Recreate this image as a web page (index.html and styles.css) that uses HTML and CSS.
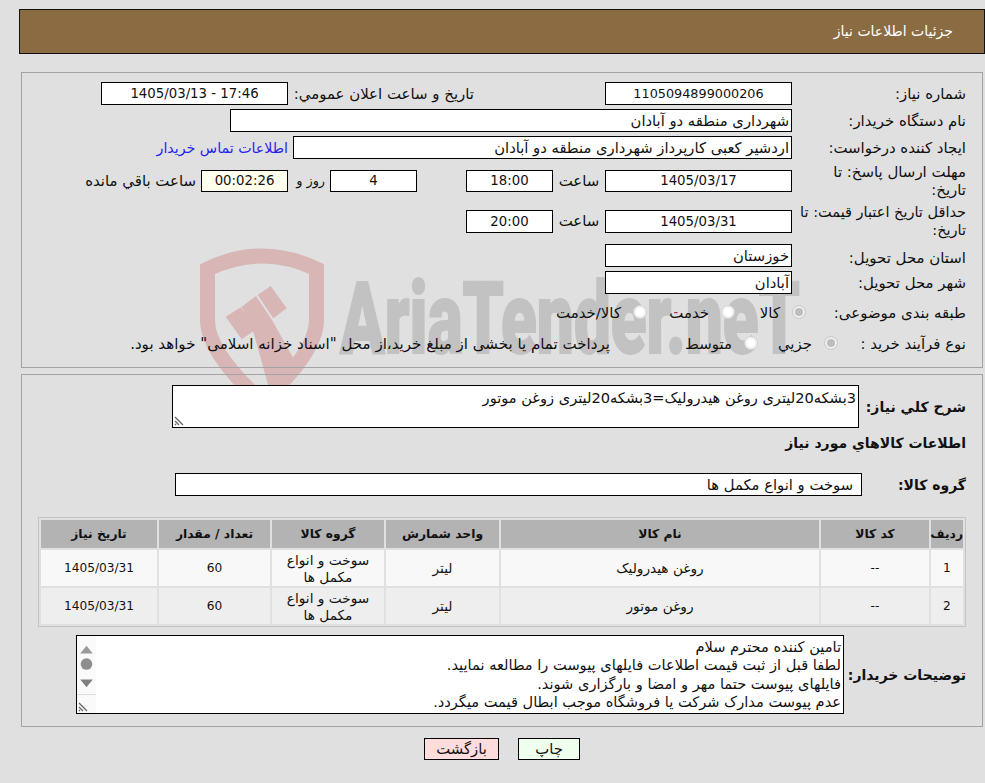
FILE: index.html
```html
<!DOCTYPE html>
<html lang="fa" dir="rtl">
<head>
<meta charset="utf-8">
<title>جزئیات اطلاعات نیاز</title>
<link rel="stylesheet" href="styles.css">
</head>
<body>
<svg class="watermark" width="985" height="783" viewBox="0 0 985 783" aria-hidden="true">
  <g fill="none" stroke="#d8b6b6" stroke-width="15">
    <path d="M207.500 320 V269 Q262 243 316.500 269 V320 Q316.500 352 262 402 Q207.500 352 207.500 320 Z"/>
  </g>
  <g fill="#d8b6b6">
    <polygon points="225.700,316.700 240.700,307.300 255,330 241.700,339.300"/>
    <polygon points="241.500,307 256,296 272,320 300,370 270,392 254,334"/>
    <polygon points="257.700,295 270.700,286 286.700,308.300 273.300,318.300"/>
  </g>
  <text class="wm-text" x="340" y="353" direction="ltr" textLength="460" lengthAdjust="spacingAndGlyphs">AriaTender.neT</text>
</svg>

<div class="page">
  <header class="title-bar">جزئیات اطلاعات نیاز</header>

  <section class="panel panel-info">
    <div class="row">
      <div class="label">شماره نیاز:</div>
      <div class="field w187 center num-long">1105094899000206</div>
      <div class="label label-public">تاریخ و ساعت اعلان عمومي:</div>
      <div class="field w187 center num" dir="ltr">1405/03/13 - 17:46</div>
    </div>
    <div class="row">
      <div class="label">نام دستگاه خریدار:</div>
      <div class="field w562">شهرداری منطقه دو آبادان</div>
    </div>
    <div class="row">
      <div class="label">ایجاد کننده درخواست:</div>
      <div class="field w499">اردشیر کعبی کارپرداز شهرداری منطقه دو آبادان</div>
      <a class="contact" href="#">اطلاعات تماس خریدار</a>
    </div>
    <div class="row row-tall">
      <div class="label">مهلت ارسال پاسخ: تا<br>تاریخ:</div>
      <div class="field w187 short center num">1405/03/17</div>
      <div class="unit">ساعت</div>
      <div class="field w87 short center num">18:00</div>
      <div class="field w87 short center days num">4</div>
      <div class="unit unit-day">روز و</div>
      <div class="field w87 short center remain num">00:02:26</div>
      <div class="remain-label">ساعت باقي مانده</div>
    </div>
    <div class="row row-tall">
      <div class="label label-narrow">حداقل تاریخ اعتبار قیمت: تا<br>تاریخ:</div>
      <div class="field w187 center num">1405/03/31</div>
      <div class="unit">ساعت</div>
      <div class="field w87 center num">20:00</div>
    </div>
    <div class="row row-end">
      <div class="label">استان محل تحویل:</div>
      <div class="field w187">خوزستان</div>
    </div>
    <div class="row">
      <div class="label">شهر محل تحویل:</div>
      <div class="field w187">آبادان</div>
    </div>
    <div class="row row-radio">
      <div class="label label-cat">طبقه بندی موضوعی:</div>
      <div class="opt w71"><span class="radio on"></span>کالا</div>
      <div class="opt w88"><span class="radio"></span>خدمت</div>
      <div class="opt"><span class="radio"></span>کالا/خدمت</div>
    </div>
    <div class="row row-process">
      <div class="label label-proc">نوع فرآیند خرید :</div>
      <div class="opt w80"><span class="radio on"></span>جزيي</div>
      <div class="opt w148"><span class="radio"></span>متوسط</div>
      <div class="opt-note">پرداخت تمام یا بخشی از مبلغ خرید،از محل "اسناد خزانه اسلامی" خواهد بود.</div>
    </div>
  </section>

  <section class="panel panel-goods">
    <div class="row row-desc">
      <div class="label label-bold w107">شرح کلي نیاز:</div>
      <div class="area area-desc">3بشکه20لیتری روغن هیدرولیک=3بشکه20لیتری زوغن موتور
        <svg class="grip" width="10" height="10" viewBox="0 0 10 10"><path d="M1 1 L9 9 M1 5 L5 9 M1 8 L2 9" stroke="#666" stroke-width="1.300" fill="none"/></svg>
      </div>
    </div>
    <h2 class="goods-title">اطلاعات کالاهاي مورد نیاز</h2>
    <div class="row row-group">
      <div class="label label-bold w104">گروه کالا:</div>
      <div class="field w687 group-field">سوخت و انواع مکمل ها</div>
    </div>
    <div class="table-box">
      <table class="goods">
        <colgroup>
          <col class="c-radif"><col class="c-code"><col class="c-name"><col class="c-unit"><col class="c-group"><col class="c-qty"><col class="c-date">
        </colgroup>
        <thead>
          <tr><th>ردیف</th><th>کد کالا</th><th>نام کالا</th><th>واحد شمارش</th><th>گروه کالا</th><th>تعداد / مقدار</th><th>تاریخ نیاز</th></tr>
        </thead>
        <tbody>
          <tr class="odd"><td class="cell-num">1</td><td class="cell-num">--</td><td>روغن هیدرولیک</td><td>لیتر</td><td>سوخت و انواع<br>مکمل ها</td><td class="cell-num">60</td><td class="cell-num">1405/03/31</td></tr>
          <tr class="even"><td class="cell-num">2</td><td class="cell-num">--</td><td>روغن موتور</td><td>لیتر</td><td>سوخت و انواع<br>مکمل ها</td><td class="cell-num">60</td><td class="cell-num">1405/03/31</td></tr>
        </tbody>
      </table>
    </div>
    <div class="row row-notes">
      <div class="label label-bold w122">توضیحات خریدار:</div>
      <div class="area area-notes">
        <div class="notes-text">تامین کننده محترم سلام
لطفا قبل از ثبت قیمت اطلاعات فایلهای پیوست را مطالعه نمایید.
فایلهای پیوست حتما مهر و امضا و بارگزاری شوند.
عدم پیوست مدارک شرکت یا فروشگاه موجب ابطال قیمت میگردد.</div>
        <div class="scroll">
          <svg class="scroll-icons" width="19" height="60" viewBox="0 0 19 60"><polygon points="3,18 16,18 9.500,10" fill="#999"/><circle cx="9.500" cy="29" r="6" fill="#8e8e8e"/><polygon points="3,45 16,45 9.500,53" fill="#808080"/></svg>
          <svg class="grip grip-scroll" width="10" height="10" viewBox="0 0 10 10"><path d="M1 1 L9 9 M1 5 L5 9 M1 8 L2 9" stroke="#666" stroke-width="1.300" fill="none"/></svg>
        </div>
      </div>
    </div>
  </section>

  <div class="actions">
    <button class="btn btn-print" type="button">چاپ</button>
    <button class="btn btn-back" type="button">بازگشت</button>
  </div>
</div>
</body>
</html>
```
FILE: styles.css
```css
* { box-sizing: border-box; }
html, body { margin: 0; padding: 0; }
body {
  position: relative;
  width: 985px;
  height: 783px;
  overflow: hidden;
  background: #e0e0e0;
  color: #111;
  font-family: "DejaVu Sans", sans-serif;
  font-size: 14.950px;
  line-height: 18px;
}
.watermark { position: absolute; left: 0; top: 0; direction: ltr; }
.wm-text { font-family: Roboto, sans-serif; font-weight: 900; font-size: 100px; fill: #c2c2c2; stroke: #c2c2c2; stroke-width: 2px; }
.page { position: relative; }

.title-bar {
  height: 45px;
  margin: 9px 0 18px 19px;
  padding: 0 31px;
  background: #8b6b42;
  border: 1px solid #111;
  color: #fff;
  font-size: 14px;
  line-height: 43px;
}
.panel {
  margin: 0 2px 0 21px;
  padding-right: 16px;
  border: 1px solid #a3a3a3;
}
.panel-info { height: 296px; padding-top: 9px; margin-bottom: 6px; }
.panel-goods { height: 353px; padding-top: 10px; }

.row { display: flex; align-items: center; min-height: 23px; margin-bottom: 4px; }
.row-tall { height: 36px; }
.row-end { height: 24px; align-items: flex-end; }
.row-radio { height: 30px; }
.label { width: 174px; flex: none; }
.label-narrow { font-size: 14.500px; }
.label-public { width: 186px; margin-right: 131px; }
.label-cat { width: 160px; }
.label-proc { width: 128px; }
.label-bold { font-weight: 700; font-size: 14px; }
.w107 { width: 107px; }
.w104 { width: 104px; }
.w122 { width: 122px; }

.field {
  flex: none;
  height: 23px;
  padding: 0 2px;
  background: #fff;
  border: 1px solid #000;
  font-size: 14.750px;
  line-height: 21px;
  white-space: nowrap;
  overflow: hidden;
}
.field.short { height: 22px; line-height: 20px; }
.center { text-align: center; }
.field.num { font-size: 13.300px; }
.field.num-long { font-size: 12.800px; }
.w187 { width: 187px; }
.w562 { width: 562px; }
.w499 { width: 499px; }
.w87 { width: 87px; }
.w687 { width: 687px; }
.group-field { padding: 0 8px; }
.days { margin-right: 49px; }
.remain { background: #ffffee; }
.unit { flex: none; width: 52px; text-align: center; }
.unit-day { width: 42px; padding-right: 5px; font-size: 12.800px; text-align: right; }
.remain-label { margin-right: 5px; white-space: nowrap; }
.contact { margin-right: 5px; color: #2222ee; font-size: 14.200px; text-decoration: none; white-space: nowrap; }

.opt { display: flex; align-items: center; flex: none; white-space: nowrap; }
.w71 { width: 71px; }
.w88 { width: 88px; }
.w80 { width: 80px; }
.w148 { width: 148px; }
.opt-note { font-size: 15.050px; white-space: nowrap; }
.radio {
  flex: none;
  width: 14px;
  height: 14px;
  margin: -2px 0 0 12px;
  border-radius: 50%;
  border: 1px solid #cfcfcf;
  background: #fff;
  box-shadow: inset 0 0 0 2px #f2f2f2;
}
.radio.on { background: #bdbdbd; box-shadow: inset 0 0 0 2px #f2f2f2; }

.area {
  position: relative;
  flex: none;
  background: #fff;
  border: 1px solid #000;
  font-size: 14.600px;
  white-space: nowrap;
  overflow: hidden;
}
.area-desc { width: 687px; height: 43px; padding: 3px 2px; }
.grip { position: absolute; left: 1px; bottom: 1px; }
.goods-title { height: 30px; margin: 0 0 15px; font-size: 14px; font-weight: 700; line-height: 30px; }
.row-desc { margin-bottom: 0; }
.row-group { margin-bottom: 21px; }

.table-box {
  width: 928px;
  height: 110px;
  margin-bottom: 8px;
  border: 1px solid #c4c4c4;
}
.goods { width: 926px; table-layout: fixed; border-collapse: separate; border-spacing: 2px; }
.c-radif { width: 32px; }
.c-code { width: 108px; }
.c-name { width: 318px; }
.c-unit { width: 113px; }
.c-group { width: 112px; }
.c-qty { width: 111px; }
.c-date { width: 116px; }
.goods th { height: 28px; padding: 0; background: #b3b3b3; font-size: 12.300px; text-align: center; font-weight: 700; }
.goods td { height: 36px; padding: 1px 0 0; text-align: center; font-size: 13.700px; line-height: 17px; }
.goods td.cell-num { font-size: 12.200px; }
.odd td { background: #f8f8f8; }
.even td { background: #eeeeee; }

.area-notes { width: 768px; height: 79px; display: flex; }
.row-notes { margin-bottom: 0; }
.notes-text { flex: 1; padding: 2px 2px 0; line-height: 18.300px; white-space: pre-line; }
.scroll { position: relative; flex: none; width: 19px; background: #fafafa; }
.scroll-icons { display: block; border-bottom: 1px solid #ddd; height: 59px; }

.actions { display: flex; justify-content: flex-start; gap: 19px; padding: 11px 405px 0 0; }
.btn {
  height: 22px;
  padding: 0;
  border: 1px solid #000;
  color: #111;
  font: 14.800px/18px "DejaVu Sans", sans-serif;
}
.btn-print { width: 62px; background: #eeffee; }
.btn-back { width: 75px; background: #ffdddd; }
```
